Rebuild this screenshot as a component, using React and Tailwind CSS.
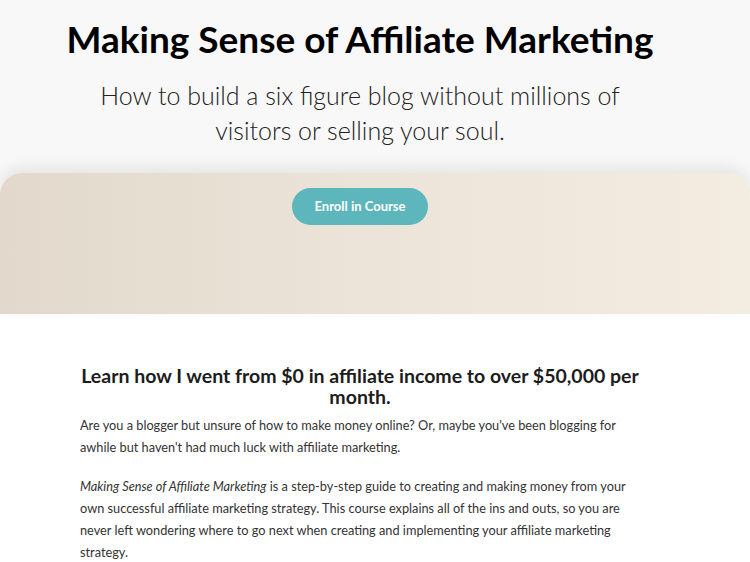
export default function App() {
  return (
    <div className="min-h-screen bg-white text-[#222]" style={{ fontFamily: "Lato, 'Open Sans', sans-serif" }}>
      {/* Hero */}
      <div className="bg-[#f8f8f8]">
        <div className="pr-[30px] text-center">
          <h1 className="pt-[15px] text-[37px] font-bold leading-[48px] text-black">Making Sense of Affiliate Marketing</h1>
          <p className="mx-auto mt-[15px] w-[540px] text-[25px] font-light leading-[35px] text-[#222]">
            How to build a six figure blog without millions of visitors or selling your soul.
          </p>
        </div>
        <div className="mt-[25px] flex h-[141px] justify-center rounded-t-[22px] bg-gradient-to-r from-[#e2d9cc] via-[#ece4d8] to-[#f3ece1] pr-[30px] pt-[15px] shadow-[0_-6px_14px_rgba(0,0,0,0.08)]">
          <button className="h-[37px] w-[136px] rounded-full bg-[#5cb6bc] text-[13px] font-bold text-white">
            Enroll in Course
          </button>
        </div>
      </div>

      {/* Body */}
      <div className="ml-[80px] w-[560px] pt-[51px]">
        <h2 className="text-center text-[19.5px] font-bold leading-[21px] text-[#1c1c1c]">
          Learn how I went from $0 in affiliate income to over $50,000 per month.
        </h2>
        <p className="mt-[7px] text-[12.75px] leading-[22px] text-[#333]">
          Are you a blogger but unsure of how to make money online? Or, maybe you've been blogging for awhile but haven't had much luck with affiliate marketing.
        </p>
        <p className="mt-[17px] text-[12.75px] leading-[22px] text-[#333]">
          <em>Making Sense of Affiliate Marketing</em> is a step-by-step guide to creating and making money from your own successful affiliate marketing strategy. This course explains all of the ins and outs, so you are never left wondering where to go next when creating and implementing your affiliate marketing strategy.
        </p>
      </div>
    </div>
  );
}
